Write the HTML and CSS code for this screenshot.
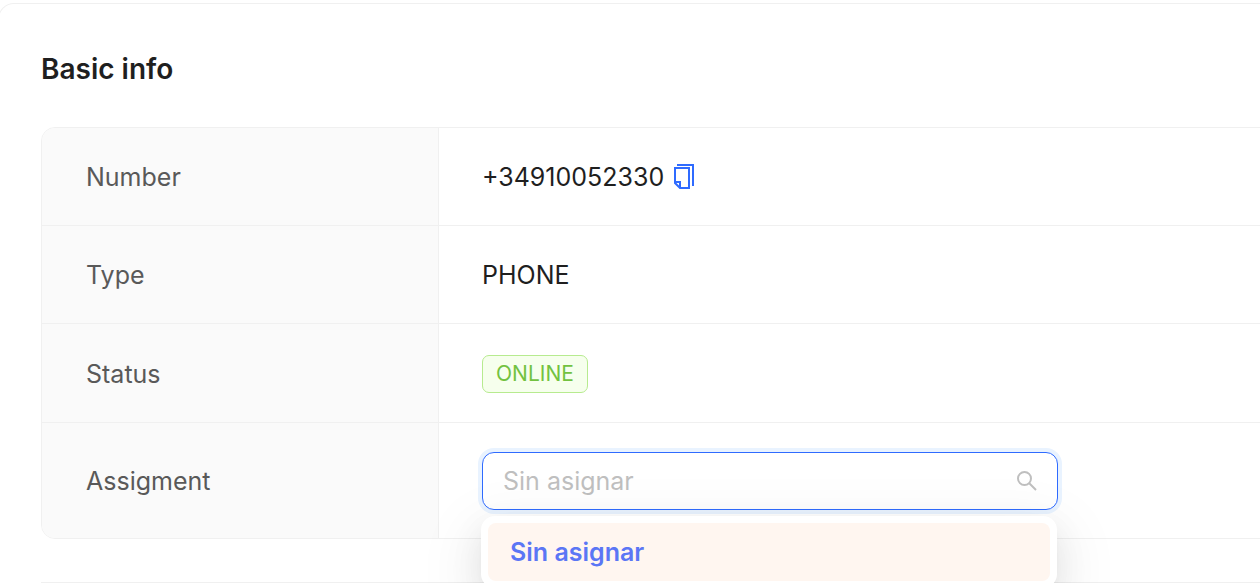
FILE: index.html
```html
<!doctype html>
<html lang="en">
<head>
<meta charset="utf-8">
<title>Basic info</title>
<link rel="stylesheet" href="styles.css">
</head>

<body>
	<div class="card">
		<h2 class="title">Basic info</h2>
		<table class="info">
			<tr>
				<th scope="row">Number</th>
				<td>
					<div class="number">
						<span>+34910052330</span>
						<button type="button" class="copy" aria-label="Copy">
							<svg width="22" height="26" viewBox="0 0 22 26" fill="none" stroke="#2f6bff" stroke-width="2">
								<path d="M4 1H20V22"/>
								<path d="M2 4H16V24H7L2 19Z"/>
								<path d="M2 18H7V24"/>
							</svg>
						</button>
					</div>
				</td>
			</tr>
			<tr>
				<th scope="row">Type</th>
				<td>PHONE</td>
			</tr>
			<tr class="status">
				<th scope="row">Status</th>
				<td><span class="tag">ONLINE</span></td>
			</tr>
			<tr class="assign">
				<th scope="row"><label for="assign">Assigment</label></th>
				<td>
					<div class="select">
						<div class="selector">
							<input type="text" id="assign" placeholder="Sin asignar">
							<svg width="20" height="20" viewBox="0 0 20 20" fill="none" stroke="#bfbfbf" stroke-width="2">
								<circle cx="7.500" cy="7.500" r="6.500"/>
								<path d="M12 12L19 19"/>
							</svg>
						</div>
						<div class="dropdown">
							<button type="button" class="option">Sin asignar</button>
						</div>
					</div>
				</td>
			</tr>
		</table>
		<hr class="line">
	</div>
</body>
</html>
```
FILE: styles.css
```css
*{
	box-sizing: border-box;
	margin: 0;
	padding: 0;
}
body{
	background-color: #fff;
	color: #1f1f1f;
	font-family: Inter, "Liberation Sans", sans-serif;
	font-size: 25px;
	line-height: 40px;
	overflow: hidden;
}
button, input{
	font: inherit;
	border: 0;
	background: none;
}
.card{
	margin: 3px -20px 0 -2px;
	padding: 45px 0 0 42px;
	border: 1px solid #f0f0f0;
	border-bottom: 0;
	border-radius: 16px 16px 0 0;
}
.title{
	margin-bottom: 38px;
	font-size: 28px;
	font-weight: 600;
	line-height: 40px;
}

/* table */
.info{
	width: 100%;
	border: 1px solid #f0f0f0;
	border-radius: 14px;
	border-spacing: 0;
}
.info th,
.info td{
	height: 98px;
	padding: 0 43px;
	text-align: left;
	vertical-align: middle;
	border-bottom: 1px solid #f0f0f0;
}
.info th{
	width: 397px;
	padding-left: 44px;
	color: #595959;
	font-weight: 400;
	background-color: #fafafa;
	border-right: 1px solid #f0f0f0;
}
.info tr:first-child th{
	border-top-left-radius: 13px;
}
.info tr:last-child th{
	border-bottom-left-radius: 13px;
}
.info .status th,
.info .status td{
	height: 99px;
	padding-top: 1px;
}
.info .assign th,
.info .assign td{
	height: 115px;
	border-bottom: 0;
}
.number{
	display: flex;
	align-items: center;
	gap: 9px;
}
.copy{
	display: flex;
	cursor: pointer;
}
.tag{
	display: block;
	width: fit-content;
	padding: 0 13px;
	color: #72c240;
	font-size: 21px;
	line-height: 36px;
	background-color: #f6ffed;
	border: 1px solid #b7eb8f;
	border-radius: 7px;
}

/* select */
.select{
	position: relative;
	width: 576px;
}
.selector{
	display: flex;
	align-items: center;
	height: 58px;
	padding: 0 20px;
	background-color: #fff;
	border: 1px solid #2f6bff;
	border-radius: 12px;
	box-shadow: 0 0 0 4px #e9f3ff;
}
.selector input{
	flex: 1;
	min-width: 0;
	height: 40px;
	outline: none;
}
.selector input::placeholder{
	color: #bfbfbf;
	opacity: 1;
}
.dropdown{
	position: absolute;
	top: 64px;
	left: -1px;
	width: 100%;
	padding: 7px;
	background-color: #fff;
	border-radius: 14px;
	box-shadow: 0 12px 32px rgba(0,0,0,.08), 0 6px 12px -8px rgba(0,0,0,.12), 0 18px 56px 16px rgba(0,0,0,.05);
}
.option{
	display: block;
	width: 100%;
	height: 58px;
	padding: 0 22px;
	color: #5b76f5;
	font-weight: 600;
	text-align: left;
	background-color: #fff6f0;
	border-radius: 8px;
	cursor: pointer;
}
.line{
	margin-top: 43px;
	border: 0;
	border-top: 1px solid #f0f0f0;
}
```
